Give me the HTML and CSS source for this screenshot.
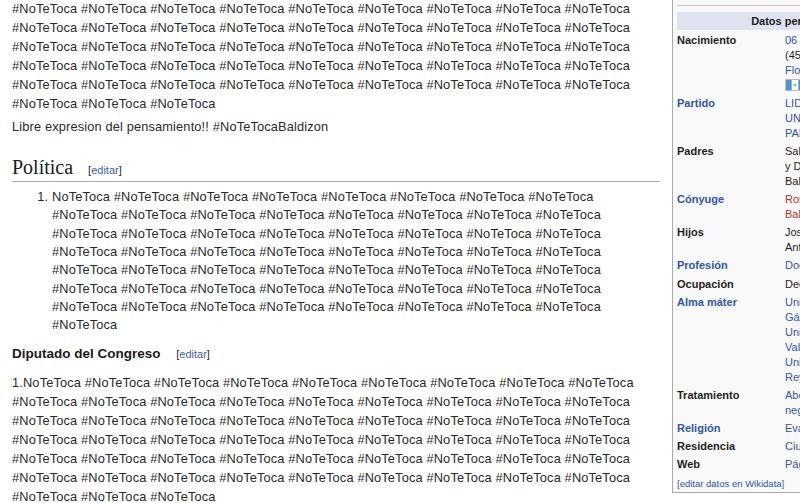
FILE: index.html
```html
<!DOCTYPE html>
<html lang="es">
<head>
<meta charset="utf-8">
<title>Manuel Baldizón</title>
<link rel="stylesheet" href="styles.css">
</head>
<body>
<div class="page">
  <main class="content">
    <p class="para first">#NoTeToca #NoTeToca #NoTeToca #NoTeToca #NoTeToca #NoTeToca #NoTeToca #NoTeToca #NoTeToca #NoTeToca #NoTeToca #NoTeToca #NoTeToca #NoTeToca #NoTeToca #NoTeToca #NoTeToca #NoTeToca #NoTeToca #NoTeToca #NoTeToca #NoTeToca #NoTeToca #NoTeToca #NoTeToca #NoTeToca #NoTeToca #NoTeToca #NoTeToca #NoTeToca #NoTeToca #NoTeToca #NoTeToca #NoTeToca #NoTeToca #NoTeToca #NoTeToca #NoTeToca #NoTeToca #NoTeToca #NoTeToca #NoTeToca #NoTeToca #NoTeToca #NoTeToca #NoTeToca #NoTeToca #NoTeToca</p>
    <p class="para libre">Libre expresion del pensamiento!! #NoTeTocaBaldizon</p>

    <h2 class="section-title">Política <span class="editsection">[<a href="#">editar</a>]</span></h2>
    <ol class="list">
      <li>NoTeToca #NoTeToca #NoTeToca #NoTeToca #NoTeToca #NoTeToca #NoTeToca #NoTeToca #NoTeToca #NoTeToca #NoTeToca #NoTeToca #NoTeToca #NoTeToca #NoTeToca #NoTeToca #NoTeToca #NoTeToca #NoTeToca #NoTeToca #NoTeToca #NoTeToca #NoTeToca #NoTeToca #NoTeToca #NoTeToca #NoTeToca #NoTeToca #NoTeToca #NoTeToca #NoTeToca #NoTeToca #NoTeToca #NoTeToca #NoTeToca #NoTeToca #NoTeToca #NoTeToca #NoTeToca #NoTeToca #NoTeToca #NoTeToca #NoTeToca #NoTeToca #NoTeToca #NoTeToca #NoTeToca #NoTeToca #NoTeToca #NoTeToca #NoTeToca #NoTeToca #NoTeToca #NoTeToca #NoTeToca #NoTeToca #NoTeToca</li>
    </ol>

    <h3 class="sub-title">Diputado del Congreso <span class="editsection">[<a href="#">editar</a>]</span></h3>
    <p class="para">1.NoTeToca #NoTeToca #NoTeToca #NoTeToca #NoTeToca #NoTeToca #NoTeToca #NoTeToca #NoTeToca #NoTeToca #NoTeToca #NoTeToca #NoTeToca #NoTeToca #NoTeToca #NoTeToca #NoTeToca #NoTeToca #NoTeToca #NoTeToca #NoTeToca #NoTeToca #NoTeToca #NoTeToca #NoTeToca #NoTeToca #NoTeToca #NoTeToca #NoTeToca #NoTeToca #NoTeToca #NoTeToca #NoTeToca #NoTeToca #NoTeToca #NoTeToca #NoTeToca #NoTeToca #NoTeToca #NoTeToca #NoTeToca #NoTeToca #NoTeToca #NoTeToca #NoTeToca #NoTeToca #NoTeToca #NoTeToca #NoTeToca #NoTeToca #NoTeToca #NoTeToca #NoTeToca #NoTeToca #NoTeToca #NoTeToca #NoTeToca</p>
  </main>

  <aside class="infobox">
    <div class="prev-row"></div>
    <div class="ib-header">Datos personales</div>
    <div class="ib-grid">
      <div class="lbl">Nacimiento</div>
      <div class="val"><a href="#">06 de junio</a> de <a href="#">1970</a><br>(45 años)<br><a href="#">Flores</a>, <a href="#">Petén</a><br><span class="flag"><svg width="20" height="12" viewBox="0 0 20 12"><rect x="0" y="0" width="20" height="12" fill="#fff"/><rect x="0.5" y="0.5" width="6.2" height="11" fill="#4997d0"/><rect x="13.3" y="0.5" width="6.2" height="11" fill="#4997d0"/><circle cx="10" cy="6" r="1.6" fill="#9cbf7a"/><rect x="0.5" y="0.5" width="19" height="11" fill="none" stroke="#bbb" stroke-width="1"/></svg></span> <a href="#">Guatemala</a></div>

      <div class="lbl link">Partido</div>
      <div class="val"><a href="#">LIDER</a><br><a href="#">UNE</a><br><a href="#">PAN</a></div>

      <div class="lbl">Padres</div>
      <div class="val">Salvador Baldizón<br>y Doris Méndez<br>Baldizón</div>

      <div class="lbl link">Cónyuge</div>
      <div class="val"><a class="new" href="#">Rosa María</a><br><a class="new" href="#">Baldizón</a></div>

      <div class="lbl">Hijos</div>
      <div class="val">José Manuel<br>Antonio</div>

      <div class="lbl link">Profesión</div>
      <div class="val"><a href="#">Doctor</a></div>

      <div class="lbl">Ocupación</div>
      <div class="val">Decano</div>

      <div class="lbl link">Alma máter</div>
      <div class="val"><a href="#">Universidad Mariano</a><br><a href="#">Gálvez</a><br><a href="#">Universidad de</a><br><a href="#">Valencia</a><br><a href="#">Universidad</a><br><a href="#">Rey Juan Carlos</a></div>

      <div class="lbl">Tratamiento</div>
      <div class="val"><a href="#">Abogado</a><br><a href="#">negociador</a></div>

      <div class="lbl link">Religión</div>
      <div class="val"><a href="#">Evangélico</a></div>

      <div class="lbl">Residencia</div>
      <div class="val"><a href="#">Ciudad de Guatemala</a></div>

      <div class="lbl">Web</div>
      <div class="val"><a href="#">Página oficial</a></div>
    </div>
    <div class="ib-edit">[<a href="#">editar datos en Wikidata</a>]</div>
  </aside>
</div>
</body>
</html>
```

FILE: styles.css
```css
html, body {
  margin: 0;
  padding: 0;
  overflow: hidden;
  background: #ffffff;
}

body {
  width: 800px;
  height: 503px;
  font-family: "Liberation Sans", Arial, sans-serif;
  color: #2a2a2a;
}

a {
  color: #2f56a6;
  text-decoration: none;
}

.page {
  display: flex;
  align-items: flex-start;
  width: 1000px;
}

/* ---------- main content ---------- */
.content {
  width: 648px;
  flex: none;
  padding-left: 12px;
  font-size: 12.8px;
  letter-spacing: 0.15px;
}

.para {
  margin: 3.3px 0 0;
  line-height: 19.1px;
}

.para.first {
  margin-top: -1.3px;
}

.section-title {
  margin: 21px 0 0;
  padding: 0;
  font-family: "Liberation Serif", "Times New Roman", serif;
  font-weight: normal;
  font-size: 20px;
  line-height: 21px;
  letter-spacing: 0;
  color: #1a1a1a;
  border-bottom: 1px solid #aaaaaa;
}

.editsection {
  font-family: "Liberation Sans", Arial, sans-serif;
  font-size: 11px;
  font-weight: normal;
  letter-spacing: 0;
  color: #2a2a2a;
  margin-left: 10px;
}

.editsection a {
  color: #3b63b0;
}

.list {
  margin: 6.5px 0 0;
  padding-left: 40px;
  line-height: 18.3px;
}

.sub-title {
  margin: 9px 0 0;
  font-size: 13.5px;
  font-weight: bold;
  line-height: 20px;
  letter-spacing: 0;
  color: #1a1a1a;
}

.sub-title .editsection {
  margin-left: 12px;
}

.sub-title + .para {
  margin-top: 9px;
}

/* ---------- infobox ---------- */
.infobox {
  flex: none;
  width: 240px;
  margin-left: 12px;
  margin-top: -8px;
  padding: 3px 3px 2px 4px;
  background: #f9f9f9;
  border: 1px solid #aaaaaa;
  font-size: 11px;
  line-height: 15px;
  color: #1e1e1e;
}

.prev-row {
  height: 9px;
  border-bottom: 1px solid #c8c8c8;
}

.ib-header {
  margin-top: 6px;
  height: 18px;
  line-height: 18px;
  background: #dfe3f0;
  text-align: center;
  font-weight: bold;
  color: #1e1e1e;
}

.ib-grid {
  display: grid;
  grid-template-columns: 108px 1fr;
  row-gap: 3.1px;
  margin-top: 3px;
  padding-left: 0;
}

.lbl {
  font-weight: bold;
}

.lbl.link {
  color: #2f56a6;
}

.val {
  white-space: nowrap;
}

.val a.new {
  color: #c03030;
}

.flag svg {
  vertical-align: -2px;
}

.ib-edit {
  margin-top: 5px;
  font-size: 9.5px;
  line-height: 13px;
  color: #3b63b0;
}
```
